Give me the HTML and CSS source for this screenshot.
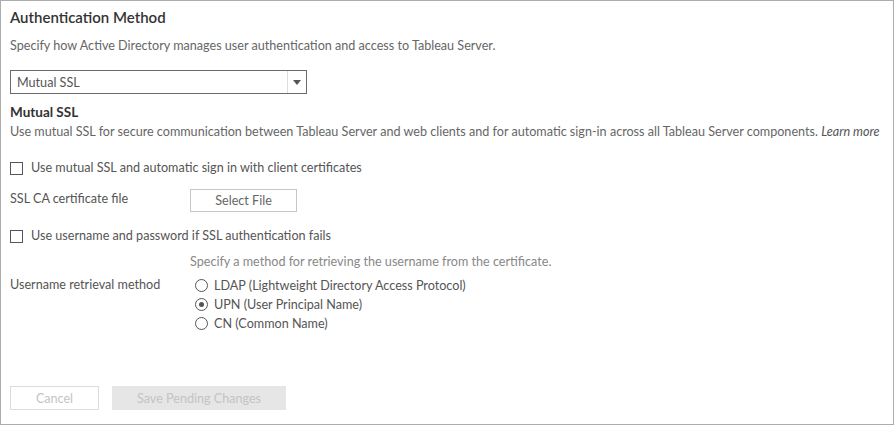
FILE: index.html
```html
<!DOCTYPE html>
<html lang="en">
<head>
    <meta charset="UTF-8">
    <title>Authentication Method</title>
    <link rel="stylesheet" href="styles.css">
</head>
<body>
    <div class="panel">
        <h1 class="title">Authentication Method</h1>
        <p class="intro">Specify how Active Directory manages user authentication and access to Tableau Server.</p>

        <div class="select-box">
            <span class="select-value">Mutual SSL</span>
            <span class="select-arrow"></span>
        </div>

        <h2 class="section-title">Mutual SSL</h2>
        <p class="section-desc">Use mutual SSL for secure communication between Tableau Server and web clients and for automatic sign-in across all Tableau Server components. <em>Learn more</em></p>

        <label class="check-row check-first">
            <span class="checkbox"></span>
            Use mutual SSL and automatic sign in with client certificates
        </label>

        <div class="field-row file-row">
            <span class="field-label">SSL CA certificate file</span>
            <button class="btn-file">Select File</button>
        </div>

        <label class="check-row check-second">
            <span class="checkbox"></span>
            Use username and password if SSL authentication fails
        </label>

        <p class="hint">Specify a method for retrieving the username from the certificate.</p>
        <div class="field-row radio-block">
            <span class="field-label">Username retrieval method</span>
            <div class="radio-list">
                <label class="radio-row"><span class="radio"></span>LDAP (Lightweight Directory Access Protocol)</label>
                <label class="radio-row"><span class="radio checked"></span>UPN (User Principal Name)</label>
                <label class="radio-row"><span class="radio"></span>CN (Common Name)</label>
            </div>
        </div>

        <div class="actions">
            <button class="btn-cancel">Cancel</button>
            <button class="btn-save">Save Pending Changes</button>
        </div>
    </div>
</body>
</html>
```

FILE: styles.css
```css
html, body {
    margin: 0;
    padding: 0;
}
body {
    width: 894px;
    height: 425px;
    background: #fff;
    font-family: Lato, 'Open Sans', sans-serif;
    font-size: 12.6px;
    color: #555;
}
.panel {
    box-sizing: border-box;
    width: 894px;
    height: 425px;
    border: 1px solid #acacac;
    padding: 6px 9px 0 9px;
}
.title {
    margin: 0;
    font-size: 15px;
    font-weight: 600;
    color: #333;
    line-height: 20px;
}
.intro {
    margin: 9px 0 0 0;
    line-height: 20px;
    color: #666;
}
.select-box {
    box-sizing: border-box;
    width: 297px;
    height: 24px;
    margin-top: 14px;
    border: 1px solid #6b6b6b;
    display: flex;
    align-items: center;
    justify-content: space-between;
}
.select-value {
    padding-left: 6px;
    color: #555;
}
.select-arrow {
    width: 18px;
    height: 22px;
    border-left: 1px solid #ddd;
    position: relative;
}
.select-arrow::after {
    content: "";
    position: absolute;
    left: 5px;
    top: 9px;
    border-left: 4px solid transparent;
    border-right: 4px solid transparent;
    border-top: 5px solid #555;
}
.section-title {
    margin: 9px 0 0 0;
    font-size: 13.5px;
    font-weight: 700;
    color: #333;
    line-height: 18px;
}
.section-desc {
    margin: 2px 0 0 0;
    line-height: 18px;
    color: #666;
}
.section-desc em {
    color: #555;
}
.check-row {
    display: flex;
    align-items: center;
    gap: 8px;
    line-height: 16px;
    color: #555;
}
.check-first {
    margin-top: 19px;
}
.check-second {
    margin-top: 16px;
}
.checkbox {
    box-sizing: border-box;
    width: 13px;
    height: 13px;
    border: 1px solid #555;
    background: #fff;
}
.field-row {
    display: flex;
}
.field-label {
    width: 180px;
    color: #555;
}
.file-row {
    margin-top: 13px;
    align-items: flex-start;
}
.file-row .field-label {
    line-height: 20px;
}
.btn-file {
    box-sizing: border-box;
    width: 107px;
    height: 23px;
    background: #fff;
    border: 1px solid #c7c7c7;
    font-family: inherit;
    font-size: 12.6px;
    color: #666;
    padding: 0;
}
.hint {
    margin: 10px 0 0 180px;
    line-height: 16px;
    color: #888;
}
.radio-block {
    margin-top: 6px;
    align-items: flex-start;
}
.radio-block .field-label {
    line-height: 18px;
}
.radio-list {
    display: flex;
    flex-direction: column;
    padding-left: 5px;
}
.radio-row {
    display: flex;
    align-items: center;
    gap: 6px;
    height: 19px;
    color: #555;
}
.radio {
    box-sizing: border-box;
    width: 13px;
    height: 13px;
    border: 1px solid #555;
    border-radius: 50%;
    position: relative;
}
.radio.checked::after {
    content: "";
    position: absolute;
    left: 3px;
    top: 3px;
    width: 5px;
    height: 5px;
    border-radius: 50%;
    background: #555;
}
.actions {
    display: flex;
    gap: 13px;
    margin-top: 53px;
}
.actions button {
    box-sizing: border-box;
    height: 24px;
    font-family: inherit;
    font-size: 12.6px;
    color: #c4c4c4;
    padding: 0;
}
.btn-cancel {
    width: 89px;
    background: #fff;
    border: 1px solid #dcdcdc;
}
.btn-save {
    width: 174px;
    background: #e6e6e6;
    border: none;
    color: #b8b8b8;
}
```
